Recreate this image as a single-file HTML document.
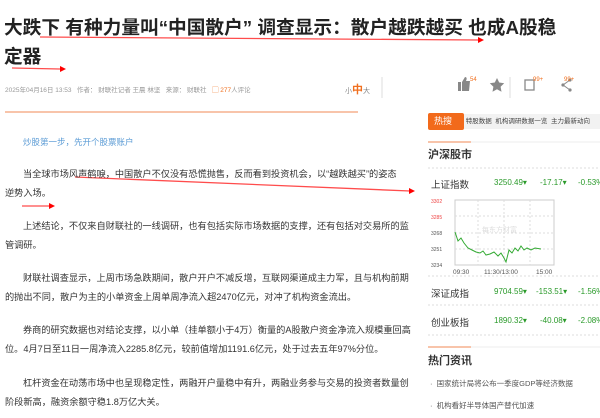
<!DOCTYPE html><html><head><meta charset="utf-8"><style>
body{margin:0;width:600px;height:418px;background:#fff;position:relative;overflow:hidden;font-family:"Liberation Sans","Noto Sans CJK SC",sans-serif;color:#333}
.a{position:absolute;white-space:nowrap}
.t{font-size:18.7px;font-weight:bold;color:#222}
.p{font-size:9.2px;color:#333}
.m{font-size:6.5px;color:#999}
.g{color:#2a9a2a;font-size:8px}
.r{font-size:9.5px;color:#333}
</style></head><body>
<div class="a t" style="left:4px;top:13px">大跌下 有种力量叫“中国散户” 调查显示：散户越跌越买 也成A股稳</div>
<div class="a t" style="left:4px;top:42px">定器</div>
<svg class="a" style="left:0;top:0" width="600" height="418">
<g stroke="#f00" stroke-width="1.3">
<line x1="40" y1="37" x2="478" y2="40" stroke-opacity=".7"/>
<line x1="12" y1="68" x2="60" y2="69" stroke-opacity=".7"/>
<line x1="75" y1="177" x2="410" y2="191" stroke-opacity=".7"/>
<line x1="22" y1="206" x2="50" y2="206" stroke-opacity=".7"/></g>
<path d="M478 37l6 3-6 3z" fill="#f00"/><path d="M60 66l6 3-6 3z" fill="#f00"/><path d="M409 188l6 3-6 3z" fill="#f00"/><path d="M49 203l6 3-6 3z" fill="#f00"/>
<line x1="5" y1="112" x2="358" y2="112" stroke="#f6b08e" stroke-width="1.5"/>
<line x1="428" y1="142" x2="471" y2="142" stroke="#f6b08e" stroke-width="1.5"/>
<line x1="428" y1="347" x2="471" y2="347" stroke="#f6b08e" stroke-width="1.5"/>
<line x1="471" y1="142" x2="600" y2="142" stroke="#eee"/><line x1="471" y1="347" x2="600" y2="347" stroke="#eee"/>
<line x1="428" y1="168" x2="600" y2="168" stroke="#ddd" stroke-dasharray="2 2"/>
<line x1="428" y1="276" x2="600" y2="276" stroke="#ddd" stroke-dasharray="2 2"/>
<line x1="428" y1="305" x2="600" y2="305" stroke="#ddd" stroke-dasharray="2 2"/>
<line x1="428" y1="335" x2="600" y2="335" stroke="#ddd" stroke-dasharray="2 2"/>
<line x1="382" y1="77" x2="382" y2="98" stroke="#ddd"/><line x1="510" y1="77" x2="510" y2="98" stroke="#ddd"/>
<rect x="455" y="200" width="99" height="65" fill="none" stroke="#ccc"/>
<g stroke="#ddd" stroke-dasharray="2 2"><line x1="455" y1="216" x2="554" y2="216"/><line x1="455" y1="233" x2="554" y2="233"/><line x1="455" y1="249" x2="554" y2="249"/><line x1="478" y1="200" x2="478" y2="265"/><line x1="504" y1="200" x2="504" y2="265"/><line x1="530" y1="200" x2="530" y2="265"/></g>
<polyline fill="none" stroke="#3a3" stroke-width="1" points="455,232 458,241 461,238 464,243 468,248 472,250 476,252 480,253 483,251 486,255 490,254 494,252 498,256 501,253 504,258 506,262 509,250 512,253 515,248 518,251 521,246 524,250 527,248 531,250 535,248 541,249"/>
<text x="482" y="232" font-size="7" fill="#ddd" font-family="Noto Sans CJK SC">每东方财富</text>
<g font-size="5" fill="#e44"><text x="431" y="203">3302</text><text x="431" y="219">3285</text></g>
<g font-size="5" fill="#555"><text x="431" y="235">3268</text><text x="431" y="251">3251</text><text x="431" y="267">3234</text></g>
<g font-size="6.5" fill="#555"><text x="453" y="274">09:30</text><text x="484" y="274">11:30/13:00</text><text x="536" y="274">15:00</text></g>
<path d="M458 82h3v9h-3zM462 82l3-5c2 0 2 2 1 4h4l-1 10h-7z" fill="#888"/>
<path d="M497 78l2.2 4.5 5 .7-3.6 3.5.9 5-4.5-2.4-4.5 2.4.9-5-3.6-3.5 5-.7z" fill="#888"/>
<rect x="525" y="80" width="9" height="10" fill="none" stroke="#888" stroke-width="1.3"/>
<g fill="#888"><circle cx="570" cy="80" r="1.6"/><circle cx="563" cy="85" r="1.6"/><circle cx="570" cy="90" r="1.6"/></g><path d="M570 80l-7 5 7 5" stroke="#888" fill="none"/>
</svg>
<div class="a m" style="left:5px;top:84px">2025年04月16日 13:53 &nbsp; 作者： 财联社记者 王晨 林坚 &nbsp; 来源： 财联社 &nbsp; <span style="color:#f07020">▢ 277</span>人评论</div>
<div class="a" style="left:345px;top:81px;font-size:7px;color:#888">小<b style="color:#f07020;font-size:11px">中</b>大</div>
<div class="a" style="left:470px;top:77px;font-size:6px;color:#f07020">54</div>
<div class="a" style="left:533px;top:77px;font-size:6px;color:#f07020">99+</div>
<div class="a" style="left:564px;top:77px;font-size:6px;color:#f07020">99+</div>
<div class="a" style="left:428px;top:113px;width:36px;height:17px;background:#f26a1b;color:#fff;font-size:9px;line-height:17px;text-indent:6px;border-radius:2px">热搜</div>
<div class="a" style="left:464px;top:114px;width:136px;height:15px;background:#f2f2f2;font-size:6.5px;line-height:15px;color:#444">&nbsp;特股数据 &nbsp;机构调研数据一览 &nbsp;主力最新动向</div>
<div class="a" style="left:428px;top:146px;font-size:11px;font-weight:bold;color:#333">沪深股市</div>
<div class="a r" style="left:431px;top:177px">上证指数</div>
<div class="a g" style="left:494px;top:178px">3250.49▾</div><div class="a g" style="left:540px;top:178px">-17.17▾</div><div class="a g" style="left:578px;top:178px">-0.53%</div>
<div class="a r" style="left:431px;top:286px">深证成指</div>
<div class="a g" style="left:494px;top:287px">9704.59▾</div><div class="a g" style="left:536px;top:287px">-153.51▾</div><div class="a g" style="left:578px;top:287px">-1.56%</div>
<div class="a r" style="left:431px;top:315px">创业板指</div>
<div class="a g" style="left:494px;top:316px">1890.32▾</div><div class="a g" style="left:540px;top:316px">-40.08▾</div><div class="a g" style="left:578px;top:316px">-2.08%</div>
<div class="a" style="left:428px;top:352px;font-size:11px;font-weight:bold;color:#333">热门资讯</div>
<div class="a" style="left:430px;top:378px;font-size:7.5px;color:#555">· &nbsp;国家统计局将公布一季度GDP等经济数据</div>
<div class="a" style="left:430px;top:400px;font-size:7.5px;color:#555">· &nbsp;机构看好半导体国产替代加速</div>
<div class="a" style="left:23px;top:136px;font-size:8.5px;color:#5b9bd5">炒股第一步，先开个股票账户</div>
<div class="a p" style="left:23px;top:166px">当全球市场风声鹤唳，中国散户不仅没有恐慌抛售，反而看到投资机会，以“越跌越买”的姿态</div>
<div class="a p" style="left:5px;top:185px">逆势入场。</div>
<div class="a p" style="left:23px;top:218px">上述结论，不仅来自财联社的一线调研，也有包括实际市场数据的支撑，还有包括对交易所的监</div>
<div class="a p" style="left:5px;top:237px">管调研。</div>
<div class="a p" style="left:23px;top:270px">财联社调查显示，上周市场急跌期间，散户开户不减反增，互联网渠道成主力军，且与机构前期</div>
<div class="a p" style="left:5px;top:289px">的抛出不同，散户为主的小单资金上周单周净流入超2470亿元，对冲了机构资金流出。</div>
<div class="a p" style="left:23px;top:322px">券商的研究数据也对结论支撑，以小单（挂单额小于4万）衡量的A股散户资金净流入规模重回高</div>
<div class="a p" style="left:5px;top:341px">位。4月7日至11日一周净流入2285.8亿元，较前值增加1191.6亿元，处于过去五年97%分位。</div>
<div class="a p" style="left:23px;top:375px">杠杆资金在动荡市场中也呈现稳定性，两融开户量稳中有升，两融业务参与交易的投资者数量创</div>
<div class="a p" style="left:5px;top:394px">阶段新高，融资余额守稳1.8万亿大关。</div>
</body></html>
